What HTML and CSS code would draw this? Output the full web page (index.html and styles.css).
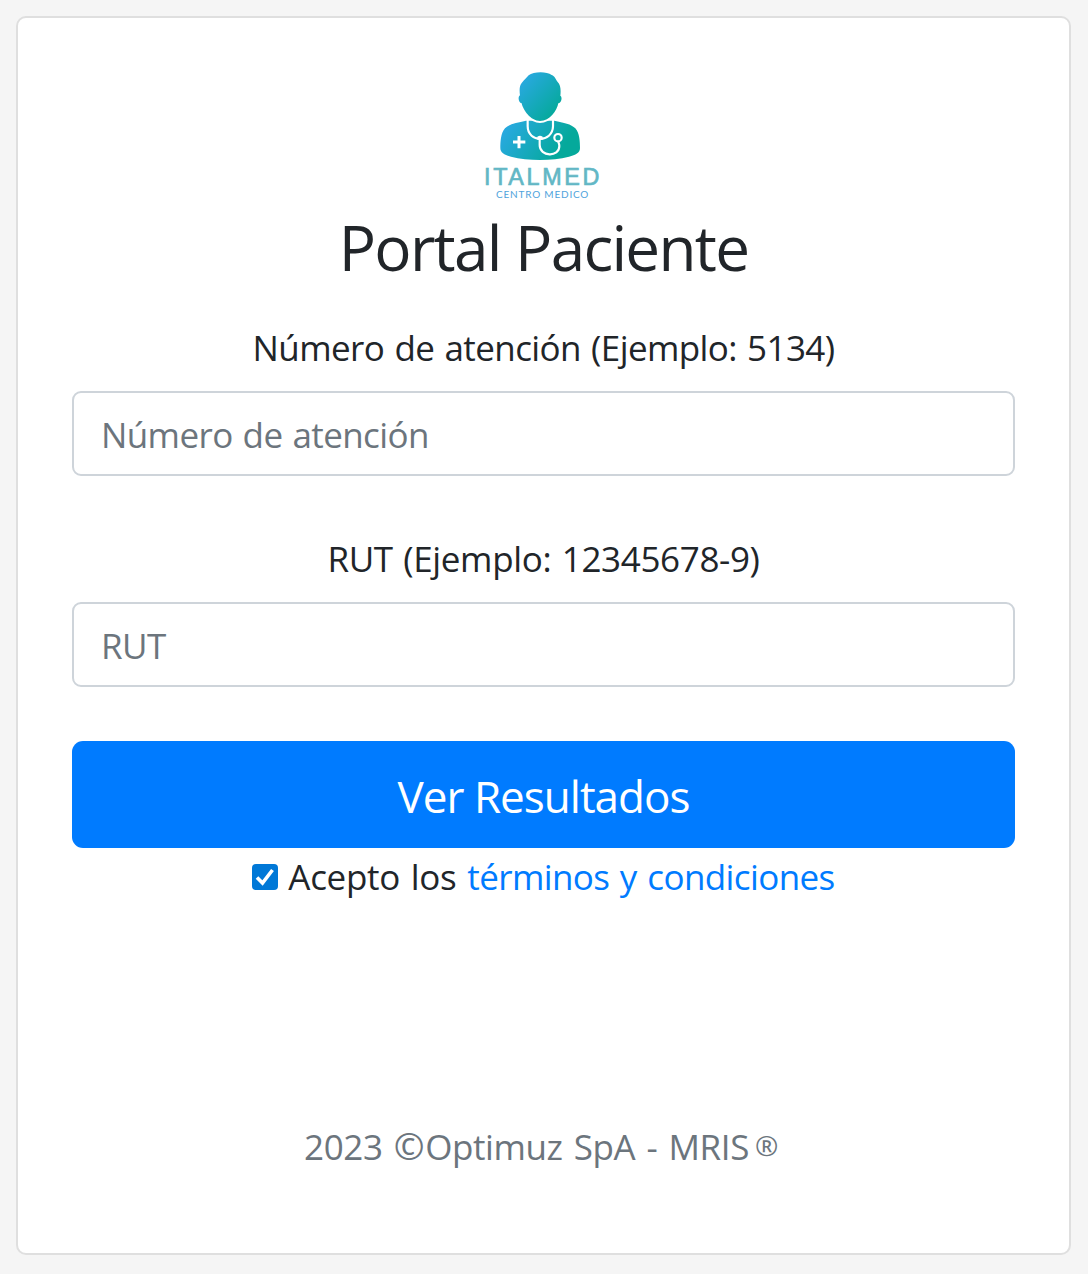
FILE: index.html
```
<!DOCTYPE html>
<html lang="es">
<head>
  <meta charset="UTF-8" />
  <meta name="viewport" content="width=device-width, initial-scale=1.0"/>
  <title>Portal Paciente</title>
  <link rel="stylesheet" href="styles.css">
</head>
<body>
  <main class="card">
    <svg class="logo" viewBox="0 36 441 414" role="img" aria-label="Italmed Centro Medico">
      <defs>
        <linearGradient id="head" x1="0" y1="0" x2="1" y2="1">
          <stop offset="0.1" stop-color="#29a9e1"/>
          <stop offset="0.85" stop-color="#05a99b"/>
        </linearGradient>
        <linearGradient id="torso" gradientUnits="userSpaceOnUse" x1="110" y1="190" x2="280" y2="300">
          <stop offset="0" stop-color="#29a9e1"/>
          <stop offset="0.9" stop-color="#05a99b"/>
        </linearGradient>
      </defs>
      <!-- shoulders -->
      <path fill="url(#torso)" d="M168 182C140 188 117 192 105 205C92 220 91 246 91 264C91 279 104 285 123 290C175 303 245 303 297 290C317 285 330 279 330 264C330 246 329 220 316 205C304 192 281 188 253 182Z"/>
      <!-- head -->
      <path fill="url(#head)" stroke="#fff" stroke-width="12" paint-order="stroke" d="M150 106C148 92 148 77 155 69C163 60 168 54 176 46C190 34 230 33 245 45C255 49 257 58 263 66C272 74 273 91 271 107C277 110 276 127 265 130C261 151 240 183 210 183C182 183 159 150 155 130C145 127 143 110 150 106Z"/>
      <!-- stethoscope -->
      <g fill="none" stroke="#fff" stroke-width="6.5">
        <path d="M173 177V199C173 249 248 249 249 199V177"/>
        <path d="M209 236V255C209 291 268 293 268 258C268 251 265 249 265 242"/>
        <circle cx="264" cy="233" r="11"/>
      </g>
      <path fill="#fff" d="M202 230Q210 224 218 230V239H202Z"/>
      <path d="M147 228V265M129 246H166" stroke="#fff" stroke-width="9"/>
      <text class="logo-name" x="42" y="374" textLength="346">ITALMED</text>
      <text class="logo-sub" x="78" y="413" textLength="277">CENTRO MEDICO</text>
    </svg>

    <h1>Portal Paciente</h1>

    <form>
      <label class="label-number" for="numero">Número de atención (Ejemplo: 5134)</label>
      <input class="field" id="numero" type="text" placeholder="Número de atención">

      <label class="label-rut" for="rut">RUT (Ejemplo: 12345678-9)</label>
      <input class="field" id="rut" type="text" placeholder="RUT">

      <button type="button">Ver Resultados</button>

      <div class="terms">
        <span class="check">
          <svg viewBox="0 0 26 26"><path d="M5 13.5L10.5 19L20.5 6" fill="none" stroke="#fff" stroke-width="3.6"/></svg>
        </span>
        <span>Acepto los <a href="#">términos y condiciones</a></span>
      </div>
    </form>

    <footer>2023 <span class="copy">©</span>Optimuz SpA - MRIS<span class="reg">®</span></footer>
  </main>
</body>
</html>
```
FILE: styles.css
```
* {
  box-sizing: border-box;
}
body {
  margin: 0;
  padding: 16px 17px 19px 16px;
  background: #f5f5f5;
  color: #212529;
  font-family: 'Segoe UI', 'Open Sans', sans-serif;
  font-size: 35px;
  line-height: 54px;
}
.card {
  height: 1239px;
  padding: 54px;
  border: 2px solid #dfdfdf;
  border-radius: 10px;
  background: #fff;
  text-align: center;
}
.logo {
  display: block;
  width: 147px;
  height: 138px;
  margin: 0 auto;
}
.logo-name {
  font: 70px 'Liberation Sans', sans-serif;
  fill: #62b7c5;
  stroke: #62b7c5;
  stroke-width: 2px;
}
.logo-sub {
  font: 30px Lato, sans-serif;
  fill: #4fa3dc;
}
h1 {
  margin: 0 0 36px;
  font-size: 62px;
  font-weight: 400;
  line-height: 75px;
  letter-spacing: -1.7px;
}
label {
  display: block;
  margin-bottom: 16px;
  word-spacing: 1.75px;
}
.label-number {
  letter-spacing: -0.6px;
}
.label-rut {
  letter-spacing: -0.35px;
}
.field {
  display: block;
  width: 100%;
  height: 85px;
  margin-bottom: 56px;
  padding: 2px 27px 0;
  border: 2px solid #ced4da;
  border-radius: 9px;
  background: #fff;
  color: #495057;
  font: inherit;
  letter-spacing: -0.6px;
  word-spacing: 1.5px;
}
.field::placeholder {
  color: #6c757d;
  opacity: 1;
}
button {
  display: block;
  width: 100%;
  height: 107px;
  margin-top: -2px;
  padding: 2px 0 0;
  border: 0;
  border-radius: 11px;
  background: #007bff;
  color: #fff;
  font: inherit;
  font-size: 44px;
  letter-spacing: -1px;
}
.terms {
  display: flex;
  justify-content: center;
  gap: 10px;
  margin-top: 2px;
  letter-spacing: -0.3px;
  word-spacing: 2px;
}
.check {
  width: 26px;
  height: 26px;
  margin-top: 14px;
  border-radius: 4px;
  background: #0078d7;
}
.check svg {
  display: block;
}
a {
  color: #007bff;
  letter-spacing: -0.6px;
  text-decoration: none;
}
footer {
  margin-top: 216px;
  margin-right: 5px;
  color: #6c757d;
  letter-spacing: -0.4px;
  word-spacing: 2.5px;
}
.copy {
  margin-right: 1px;
  font-size: 37px;
  line-height: 1;
}
.reg {
  position: relative;
  top: -4px;
  margin-left: 6px;
  font-size: 28px;
  line-height: 1;
}
```
